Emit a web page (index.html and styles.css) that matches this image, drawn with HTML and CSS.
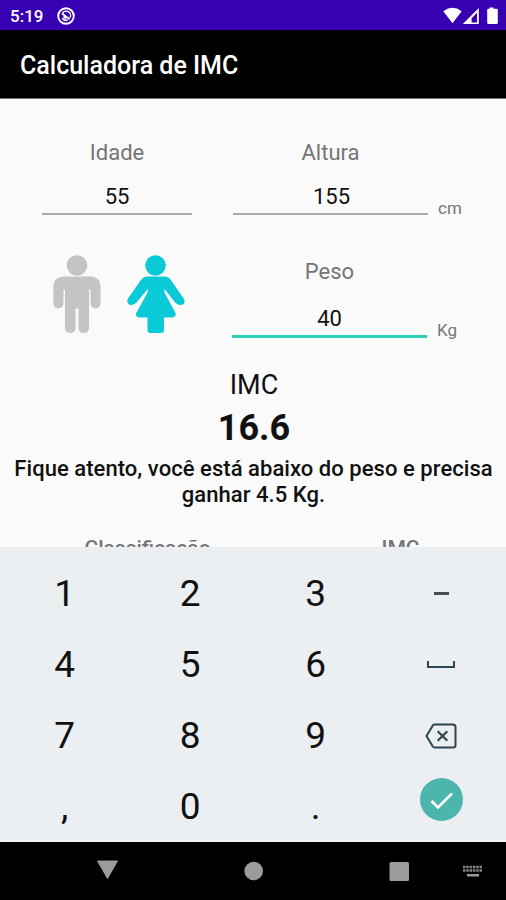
FILE: index.html
```
<!DOCTYPE html>
<html lang="pt-BR">
<head>
    <meta charset="UTF-8">
    <meta name="viewport" content="width=device-width, initial-scale=1.0">
    <title>Calculadora de IMC</title>
    <link rel="stylesheet" href="styles.css">
</head>
<body>
    <div class="status-bar">
        <span class="clock">5:19</span>
        <svg class="status-app" width="18" height="18" viewBox="0 0 18 18" fill="none" stroke="#fff">
            <circle cx="9" cy="9" r="7.8" stroke-width="1.9"/>
            <path d="M5.3 11.2a4.3 4.3 0 0 0 5.4 1.7M5.4 6.4a4.3 4.3 0 0 1 7.6 4.2" stroke-width="1.5"/>
            <path d="M5 6.5l7.6 5.7M6.5 9.5l2.500 2" stroke-width="1.8"/>
        </svg>
        <svg class="status-icons" width="56" height="18" viewBox="0 0 56 18" fill="#fff">
            <path d="M0.3 4.2Q9.5 -2.6 18.7 4.2L9.5 16.3z"/>
            <path fill-rule="evenodd" d="M35.8 1v16H19.8zM34 5.8L28.6 11.2v4.2H34z"/>
            <path d="M46.5 1.8V.5h4v1.3h3q1.3 0 1.3 1.3v12.6q0 1.3-1.3 1.3h-8q-1.3 0-1.3-1.3V3.1q0-1.3 1.3-1.3z"/>
        </svg>
    </div>

    <header class="app-bar">
        <h1>Calculadora de IMC</h1>
    </header>

    <main class="content">
        <div class="form">
            <div class="field age">
                <label>Idade</label>
                <div class="value">55</div>
            </div>
            <div class="field height">
                <label>Altura</label>
                <div class="value">155</div>
            </div>
            <span class="unit">cm</span>

            <div class="gender">
                <svg width="48" height="79" viewBox="0 0 48 79" fill="#c4c4c4">
                    <circle cx="24" cy="10.5" r="10.3"/>
                    <path d="M10 21.5H38Q47.5 22.5 47.5 32V48.5Q47 53 42.8 53.5Q38 53 37.5 48.5V34.5H36V73.5Q35.5 78 30.7 78Q26 78 25.5 73.5V53.5H22.5V73.5Q22 78 17.3 78Q12.5 78 12 73.5V34.5H10.5V48.5Q10 53 5.3 53.5Q.5 53 .3 48.5V32Q.5 22.5 10 21.5z"/>
                </svg>
                <svg width="58" height="79" viewBox="0 0 58 79" fill="#0bcad8">
                    <circle cx="28.5" cy="10.5" r="10.3"/>
                    <path d="M19 21.5H38.5Q41.5 21.8 43.5 24.5L56.7 43.5Q59 48 55.5 49.7Q51.5 51 48.5 48L37.5 34V37.5L48.8 58.5Q49 62 45.5 62.5H37V75Q37 78 34 78H23.5Q20.5 78 20.5 75V62.5H12.5Q8.5 62 9 58.5L20.8 37V34L9.5 47.5Q6.5 50.8 2.5 49.7Q-1 47.5 1 43.5L13.5 25.5Q16 22 19 21.5z"/>
                </svg>
            </div>
            <div class="field weight">
                <label>Peso</label>
                <div class="value active">40</div>
            </div>
            <span class="unit">Kg</span>
        </div>

        <section class="result">
            <div class="result-label">IMC</div>
            <div class="result-value">16.6</div>
            <p class="result-message">Fique atento, você está abaixo do peso e precisa<br>ganhar 4.5 Kg.</p>
        </section>

        <div class="table-header">
            <span>Classificação</span>
            <span>IMC</span>
        </div>
    </main>

    <div class="keypad">
        <div class="key">1</div>
        <div class="key">2</div>
        <div class="key">3</div>
        <div class="key"><span class="minus"></span></div>
        <div class="key">4</div>
        <div class="key">5</div>
        <div class="key">6</div>
        <div class="key"><span class="space"></span></div>
        <div class="key">7</div>
        <div class="key">8</div>
        <div class="key">9</div>
        <div class="key">
            <svg width="32" height="26" viewBox="0 0 32 26" fill="none" stroke="#2b4650" stroke-width="2">
                <path d="M9.5 1.5H28Q30.5 1.5 30.5 4V22Q30.5 24.5 28 24.5H9.5Q8.5 24.5 7.8 23.5L1.5 13L7.8 2.5Q8.5 1.5 9.5 1.5z"/>
                <path d="M12.7 8.2L22.3 17.8M22.3 8.2L12.7 17.8" stroke-width="2.2"/>
            </svg>
        </div>
        <div class="key">,</div>
        <div class="key">0</div>
        <div class="key">.</div>
        <div class="key">
            <span class="done">
                <svg width="43" height="43" viewBox="0 0 43 43" fill="none" stroke="#fff" stroke-width="2.5">
                    <path d="M11.5 23L18 29.5L32 15.5"/>
                </svg>
            </span>
        </div>
    </div>

    <nav class="nav-bar">
        <svg width="506" height="58" viewBox="0 0 506 58" fill="#9b9b9b">
            <path d="M97.5 19H117.5L107.5 36.5z" stroke="#9b9b9b" stroke-linejoin="round"/>
            <circle cx="253.7" cy="29" r="9.3"/>
            <rect x="389.5" y="20" width="19.5" height="19" rx="1.5"/>
            <path d="M463 25H482M463 28.5H482" stroke="#858585" stroke-width="2.5" stroke-dasharray="2.5 .8"/>
            <rect x="467" y="32" width="12" height="2.5"/>
        </svg>
    </nav>
</body>
</html>
```

FILE: styles.css
```
* {
    box-sizing: border-box;
}
body {
    margin: 0;
    width: 506px;
    height: 900px;
    overflow: hidden;
    display: flex;
    flex-direction: column;
    font-family: Roboto, sans-serif;
    background-color: #fafafa;
    color: #111;
}
svg {
    display: block;
}
.status-bar {
    height: 30px;
    padding: 1px 7px 0 10px;
    display: flex;
    align-items: center;
    background-color: #3700b3;
    color: #fff;
}
.clock {
    width: 47px;
    font-size: 17px;
    font-weight: 500;
}
.status-icons {
    margin-left: auto;
}
.app-bar {
    height: 69px;
    padding: 0 20px;
    display: flex;
    align-items: center;
    background-color: #000;
    border-bottom: 1px solid #777;
}
.app-bar h1 {
    margin: 0;
    padding-top: 2px;
    font-size: 25px;
    font-weight: 500;
    color: #fff;
}
.content {
    height: 448px;
    overflow: hidden;
}
.form {
    display: grid;
    grid-template-columns: 150px 195px 30px;
    grid-template-rows: 78px 83px;
    column-gap: 41px;
    row-gap: 40px;
    padding: 38px 0 0 42px;
}
.field {
    display: flex;
    flex-direction: column;
    align-items: center;
}
.field label {
    height: 30px;
    font-size: 22px;
    line-height: 32px;
    color: #757575;
}
.field .value {
    width: 100%;
    height: 48px;
    padding-top: 16px;
    border-bottom: 2px solid #aaa;
    font-size: 22px;
    line-height: 28px;
    text-align: center;
}
.height .value {
    padding-left: 2px;
}
.field .value.active {
    height: 53px;
    padding-top: 20px;
    border-bottom: 3px solid #2ed3b7;
}
.unit {
    align-self: end;
    margin: 0 0 -3px -31px;
    font-size: 17px;
    line-height: 20px;
    color: #757575;
}
.unit:last-child {
    margin: 0 0 -2px -32px;
}
.gender {
    display: flex;
    gap: 26px;
    padding-left: 11px;
}
.weight {
    margin-left: -1px;
    margin-right: 1px;
}
.weight label {
    line-height: 34px;
}
.result {
    margin-top: 29px;
    text-align: center;
}
.result-label {
    padding-left: 2px;
    font-size: 27px;
    line-height: 36px;
}
.result-value {
    padding-left: 2px;
    font-size: 36px;
    font-weight: 700;
    line-height: 50px;
}
.result-message {
    margin: 3px 0 0 1px;
    font-size: 22px;
    font-weight: 500;
    line-height: 26px;
    letter-spacing: 0.05px;
}
.table-header {
    display: flex;
    margin-top: 28px;
    font-size: 21px;
    font-weight: 500;
    color: #757575;
}
.table-header span {
    width: 295px;
    text-align: center;
}
.table-header span:last-child {
    width: 211px;
}
.keypad {
    height: 295px;
    padding: 11px 2px 0;
    display: grid;
    grid-template-columns: repeat(4, 1fr);
    grid-template-rows: repeat(4, 71px);
    background-color: #eceff1;
    border-bottom: 2px solid #f5f7f7;
}
.key {
    display: flex;
    justify-content: center;
    align-items: center;
    font-size: 37px;
}
.minus {
    width: 15px;
    height: 3px;
    background-color: #444d51;
}
.space {
    width: 28px;
    height: 7px;
    border: 2px solid #2b4650;
    border-top: none;
}
.done {
    margin-bottom: 15px;
    border-radius: 50%;
    background-color: #4db6ac;
}
.nav-bar {
    height: 58px;
    background-color: #000;
}
```
